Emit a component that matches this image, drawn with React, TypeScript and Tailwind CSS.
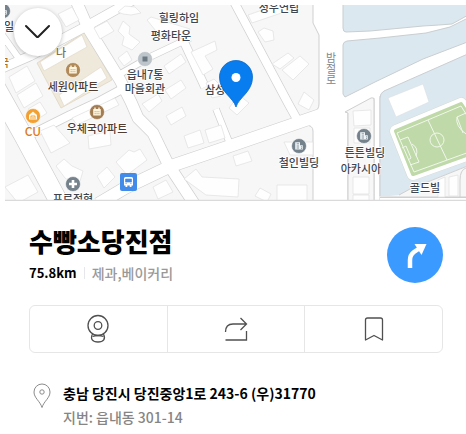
import type { ReactNode } from "react";

const ROADS: { d: string; w: number }[] = [
  { d: "M-2 70 L30 56 L85 27 L135 -1", w: 9 },
  { d: "M74 -4 L88 28 L120 80 L131 102 L138 118 L153 133 L168 164 L197 208", w: 11 },
  { d: "M98 204 L125 188 L171 166 L236 144 L326 113", w: 12 },
  { d: "M232 -2 L288 103 L298 121", w: 8 },
  { d: "M184 42 L205 87", w: 8 },
  { d: "M216 109 L230 144", w: 6 },
  { d: "M120 74 L152 56 L190 38", w: 6 },
  { d: "M0 32 L20 60", w: 6 },
  { d: "M-8 80 L24 137 L60 204", w: 18 },
  { d: "M30 135 L70 115 L100 101 L126 87", w: 8 },
];

const BUILDINGS = [
  "58,14 72,7 79,20 66,27",
  "94,28 107,21 114,31 100,39",
  "118,12 125,6 135,7 141,13 131,15 123,14",
  "118,31 123,21 130,27 129,34 140,42 132,50 122,45 124,37",
  "118,58 127,51 132,60 124,66",
  "9,77 27,66 35,81 16,93",
  "17,95 36,83 43,96 24,108",
  "28,109 40,102 47,113 38,119",
  "40,131 54,125 70,143 51,153",
  "72,118 115,98 119,105 77,125",
  "88,136 110,131 111,145 89,149",
  "116,162 129,150 134,152 140,149 147,160 127,175",
  "97,176 107,167 115,177 104,188",
  "56,166 64,159 72,166 83,171 78,188 65,178",
  "5,187 28,175 38,192 18,203",
  "147,20 151,17 190,29 187,38 160,36",
  "191,52 215,41 217,50 205,56 213,69 203,75",
  "164,66 181,54 186,62 169,74",
  "165,90 181,80 186,88 171,99",
  "142,104 158,94 162,101 149,112",
  "206,83 214,79 219,84 221,96 212,98",
  "248,15 291,0 296,8 252,23",
  "258,32 264,28 273,31 274,40 265,42",
  "272,64 288,53 294,58 280,69",
  "282,70 300,56 309,64 293,80",
  "298,104 304,92 314,100 309,110",
  "229,108 239,95 249,103 237,115",
  "166,116 182,107 186,116 171,125",
  "184,136 200,130 204,143 188,148",
  "205,130 221,125 225,138 209,143",
  "233,156 248,151 252,161 236,166",
  "184,179 196,169 202,177 239,179 238,197 206,195",
  "153,187 166,180 173,192 158,199",
  "255,196 260,188 271,194 267,202",
  "277,185 307,185 307,203 277,203",
  "284,142 313,142 313,155 290,155",
  "353,111 371,110 371,125 354,126",
  "354,128 370,128 370,143 354,143",
  "353,177 369,177 369,194 353,194",
  "353,195 369,195 369,203 353,203",
  "438,180 445,177 445,197 438,197",
  "449,177 458,175 458,196 449,196",
];

const LABELS: { x: number; y: number; t: string; c?: string; s?: number }[] = [
  { x: 179, y: 22, t: "힐링하임" },
  { x: 171, y: 40, t: "평화타운" },
  { x: 279, y: 12, t: "정우연립" },
  { x: 145, y: 79, t: "읍내7통" },
  { x: 145, y: 93, t: "마을회관" },
  { x: 215, y: 94, t: "삼성" },
  { x: 61, y: 57, t: "나", c: "#8b6946" },
  { x: 73, y: 91, t: "세원아파트", c: "#503c30" },
  { x: 97, y: 133, t: "우체국아파트", c: "#503c30" },
  { x: 33, y: 136, t: "CU", c: "#dc7b20", s: 12 },
  { x: 73, y: 203, t: "프르정형" },
  { x: 299, y: 167, t: "철인빌딩" },
  { x: 365, y: 157, t: "튼튼빌딩" },
  { x: 361, y: 173, t: "아카시아" },
  { x: 425, y: 192, t: "골드빌" },
  { x: 9, y: 31, t: "일" },
  { x: 4, y: 67, t: "국", c: "#b27418" },
];

function Marker({ x, y, fill, children }: { x: number; y: number; fill: string; children: ReactNode }) {
  return (
    <g transform={`translate(${x} ${y})`}>
      <circle r="7.5" fill={fill} stroke="#fff" strokeWidth="0.6" />
      {children}
    </g>
  );
}

const calendar = (
  <>
    <rect x="-3.8" y="-3" width="7.6" height="6.6" rx="0.6" fill="#fff6df" />
    <path d="M-2 -4.4V-2M2 -4.4V-2" stroke="#fff6df" strokeWidth="1.4" />
    <path d="M-2.4 -.3H2.4M-2.4 1.7H2.4" stroke="#b08a58" strokeWidth="0.8" strokeDasharray="1.1 0.8" />
  </>
);

const office = (
  <>
    <path d="M-3.8 3.6V-3.8H1V-.8H3.8V3.6Z" fill="#edf3f6" />
    <path d="M-2.3 -2.2H0M-2.3 0H0M-2.3 2H0M2 .8H3M2 2.4H3" stroke="#75828c" strokeWidth="0.8" />
  </>
);

function MapView() {
  return (
    <svg
      viewBox="5 5 461 196"
      className="block aspect-[461/196] w-full overflow-hidden font-['Noto_Sans_CJK_KR',sans-serif]"
      role="img"
      aria-label="수빵소당진점 주변 지도"
    >
      <rect x="0" y="0" width="470" height="206" fill="#f7f7f7" />
      <path d="M37 63L85 32L112 80L61 108Z" fill="#efe9dc" stroke="#dcd2bc" strokeWidth="0.7" />
      {ROADS.map((r) => (
        <path key={r.d} d={r.d} fill="none" stroke="#cfcfcf" strokeWidth={r.w + 1.4} strokeLinejoin="round" />
      ))}
      <path d="M313 0V23L319 35V104Q319 110 313 113L305 117V125Q313 125 313 131V206H348V112L374 98V206H380V-2Z" fill="#fff" stroke="#cfcfcf" />
      {ROADS.map((r) => (
        <path key={r.d} d={r.d} fill="none" stroke="#fff" strokeWidth={r.w} strokeLinejoin="round" />
      ))}
      <path d="M342 0H470V206H380V96H342Z" fill="#fff" />
      <g fill="#dce8ef" stroke="#c9ced1">
        <path d="M343 0H470V14L452 24Q440 25 423 26L370 31L346 32Q343 32 343 28Z" />
        <path d="M347 41L380 38L426 33L450 27L470 17V41L423 59L375 82L345 97L343 94V45Q343 42 347 41Z" />
        <path d="M380 196V98Q380 93 384 91L470 53V165L410 189L399 196Z" stroke="none" />
      </g>
      <path d="M380 196V98Q380 93 384 91L470 53" fill="none" stroke="#c9ced1" />
      <path d="M345 112L371 98Q374 97 374 101V206H348V113Z" fill="#f7f7f7" stroke="#cfcfcf" />
      <path d="M399 195L410 189L470 165V197H380" fill="#f7f7f7" stroke="#cfcfcf" />
      <path d="M466 168Q460 170 460 180V197M380 197.500H470" fill="none" stroke="#cfcfcf" />
      <path d="M388 98L423 84L429 102L396 117Z" fill="#fff" stroke="#d8dfe3" strokeWidth="0.6" />
      <g fill="#fefefe" stroke="#e0e0e0" strokeWidth="0.7">
        {BUILDINGS.map((p) => (
          <polygon key={p} points={p} />
        ))}
        <path d="M40 62L82 35L87 47L44 71Z" stroke="#e2dac8" />
        <path d="M59 95L101 67L107 78L64 106Z" stroke="#e2dac8" />
      </g>

      <path d="M396 131L461 104L489 147L413 174Z" fill="#fff" stroke="#d5dbd5" strokeWidth="13" strokeLinejoin="round" />
      <path d="M396 131L461 104L489 147L413 174Z" fill="#fff" stroke="#fff" strokeWidth="12" strokeLinejoin="round" />
      <path d="M396 131L461 104L489 147L413 174Z" fill="#bfd9a9" stroke="#bfd9a9" strokeWidth="4" strokeLinejoin="round" />
      <g fill="none" stroke="#f1f8eb" strokeWidth="1">
        <path d="M397 133L461 106L486 146L414 172Z" />
        <path d="M428 120L447 160" />
        <circle cx="437" cy="140" r="7" />
        <path d="M400 140L408 137L419 162L410 165M402 148L406 146L411 158L408 160M412 144Q419 148 416 156" />
        <path d="M466 113L457 117Q455 126 466 134M457 117L463 133" />
      </g>

      <Marker x={73} y={70} fill="#b08a58">{calendar}</Marker>
      <Marker x={97} y={112} fill="#a27c52">{calendar}</Marker>
      <Marker x={33} y={116} fill="#f2a032">
        <path d="M-4 3.600V-1L0 -4.400L4 -1V3.600Z" fill="#fff7e8" />
        <path d="M-2 0H2M-2 3V0M2 3V0M0 1V3" stroke="#f2a032" strokeWidth="0.9" />
      </Marker>
      <Marker x={73} y={184} fill="#75828c">
        <path d="M0 -4V4M-4 0H4" stroke="#fff" strokeWidth="2.600" />
      </Marker>
      <Marker x={3} y={11} fill="#75828c">{office}</Marker>
      <Marker x={145} y={59} fill="#bdc4ca">
        <rect x="-2.500" y="-2.500" width="5" height="5" fill="#6c7882" />
      </Marker>
      <Marker x={299} y={146} fill="#75828c">{office}</Marker>
      <Marker x={364} y={136} fill="#75828c">{office}</Marker>

      <rect x="120" y="173" width="17" height="18" rx="2" fill="#438be8" />
      <path d="M124 178.500Q124 177 125.500 177H131.500Q133 177 133 178.500V185.500H131.500V187H129.700V185.500H127.300V187H125.500V185.500H124Z" fill="#fff" />
      <path d="M125.500 179H131.500V182H125.500ZM125.300 183.300H127M130 183.300H131.700" fill="#438be8" stroke="#438be8" strokeWidth="0.6" />

      {LABELS.map((l) => (
        <text
          key={l.t}
          x={l.x}
          y={l.y}
          textAnchor="middle"
          fontSize={l.s ?? 11}
          fontWeight="500"
          fill={l.c ?? "#3d4650"}
          stroke="#fff"
          strokeWidth="1.5"
          strokeLinejoin="round"
          paintOrder="stroke"
        >
          {l.t}
        </text>
      ))}
      <text x="331" y="52" fontSize="11" fill="#80858a" className="[writing-mode:vertical-rl]">
        밤절로
      </text>

      <path d="M236 107C233 97 219.500 92 219.500 77A16.500 16.500 0 0 1 252.500 77C252.500 92 239 97 236 107Z" fill="#087df0" stroke="#0a68c8" strokeWidth="0.8" />
      <circle cx="236" cy="77.500" r="4.500" fill="#fff" />
      <path d="M0 200.500H470" stroke="#dadada" strokeWidth="1.500" />
    </svg>
  );
}

const actionClass = "flex h-full flex-1 items-center justify-center text-[#505050]";

export default function App() {
  return (
    <main className="min-h-screen bg-white font-['Noto_Sans_CJK_KR',sans-serif] text-black">
      <div className="relative pt-[5px] pl-[5px]">
        <MapView />
        <button
          type="button"
          aria-label="닫기"
          className="absolute top-2 left-3.5 flex size-12 items-center justify-center rounded-full bg-white shadow-[0_1px_4px_rgba(0,0,0,0.25)]"
        >
          <svg width="26" height="16" viewBox="0 0 26 16" fill="none" stroke="#222" strokeWidth="2" strokeLinecap="round" aria-hidden="true">
            <path d="M1 2L11.500 12.500Q12.500 13.500 13.500 12.500L24 2" />
          </svg>
        </button>
      </div>

      <section className="pt-6 pr-[23px] pl-[29px]">
        <header className="flex items-center justify-between">
          <div>
            <h1 className="text-[26px] leading-8 font-black">수빵소당진점</h1>
            <p className="mt-1 flex items-center text-sm leading-6">
              <span className="text-[13px] font-bold">75.8km</span>
              <span className="mx-[7px] h-3 w-px bg-gray-200" />
              <span className="font-medium text-[#999]">제과,베이커리</span>
            </p>
          </div>
          <button
            type="button"
            aria-label="길찾기"
            className="flex size-14 shrink-0 items-center justify-center rounded-full bg-[#3b9aff]"
          >
            <svg width="56" height="56" viewBox="0 0 56 56" aria-hidden="true">
              <path d="M23 41V33Q23 28 27 25L33 21" fill="none" stroke="#fff" strokeWidth="4.500" />
              <path d="M27.500 17L39.500 17L34.500 28Z" fill="#fff" />
            </svg>
          </button>
        </header>

        <div className="mt-5 flex h-12 divide-x divide-[#e6e6e6] rounded-md border border-[#e6e6e6]">
          <button type="button" aria-label="로드뷰" className={actionClass}>
            <svg width="24" height="30" viewBox="0 0 24 30" fill="none" stroke="currentColor" strokeWidth="1.300" aria-hidden="true">
              <circle cx="12" cy="11.500" r="10" />
              <circle cx="12" cy="11.500" r="3.800" />
              <path d="M6.500 20C4 25 6.500 28 12 28S20 25 17.500 20" />
              <path d="M6.500 22.500Q12 20.500 17.500 22.500" />
            </svg>
          </button>
          <button type="button" aria-label="공유" className={actionClass}>
            <svg width="24" height="26" viewBox="0 0 24 26" fill="none" stroke="currentColor" strokeWidth="1.300" aria-hidden="true">
              <path d="M1.500 16Q1.500 8 9 8H22M16.500 2L22.500 8L16.500 14M1.500 24H22.500V15" />
            </svg>
          </button>
          <button type="button" aria-label="저장" className={actionClass}>
            <svg width="20" height="26" viewBox="0 0 20 26" fill="none" stroke="currentColor" strokeWidth="1.300" strokeLinejoin="round" aria-hidden="true">
              <path d="M1.500 24V4Q1.500 2 3.500 2H16.500Q18.500 2 18.500 4V24L10 19.500Z" />
            </svg>
          </button>
        </div>

        <address className="mt-7 flex gap-3 pl-1 text-sm leading-6 not-italic">
          <svg width="18" height="26" viewBox="0 0 18 26" className="mt-0.5 shrink-0" fill="none" stroke="#8b8b8b" aria-hidden="true">
            <path d="M9 24.500C7 18 1 15 1 9A8 8 0 0 1 17 9C17 15 11 18 9 24.500Z" />
            <circle cx="9" cy="9" r="2.200" />
          </svg>
          <div>
            <p className="font-bold">충남 당진시 당진중앙1로 243-6 (우)31770</p>
            <p className="font-medium text-[#858585]">지번: 읍내동 301-14</p>
          </div>
        </address>
      </section>
    </main>
  );
}
